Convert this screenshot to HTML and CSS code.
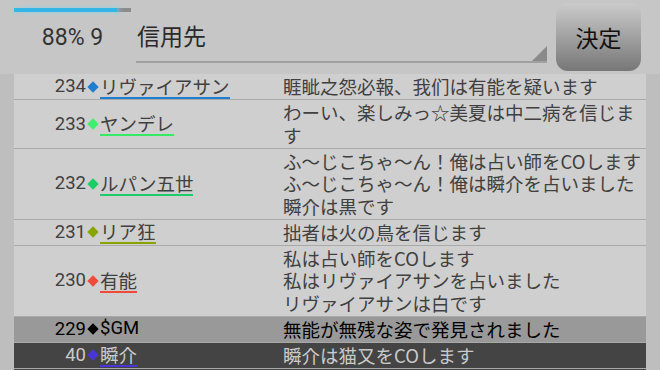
FILE: index.html
```html
<!DOCTYPE html>
<html>

<head>
    <meta charset="utf-8">
    <meta name="viewport" content="width=device-width, initial-scale=1">
    <title>Log</title>
    <link rel="stylesheet" href="styles.css">
</head>

<body>
    <div class="header">
        <div class="status">
            <div class="progress"><div class="progress-fill"></div></div>
            <div class="status-text">88% 9</div>
        </div>
        <div class="spinner">
            <span class="spinner-text">信用先</span>
            <span class="spinner-arrow"></span>
        </div>
        <button class="decide" type="button">決定</button>
    </div>

    <div class="log">
        <div class="row">
            <div class="who"><span class="num">234</span><span class="mark blue"></span><span class="name blue">リヴァイアサン</span></div>
            <div class="msg">睚眦之怨必報、我们は有能を疑います</div>
        </div>
        <div class="row">
            <div class="who"><span class="num">233</span><span class="mark lime"></span><span class="name lime">ヤンデレ</span></div>
            <div class="msg">わーい、楽しみっ☆美夏は中二病を信じます</div>
        </div>
        <div class="row">
            <div class="who"><span class="num">232</span><span class="mark green"></span><span class="name green">ルパン五世</span></div>
            <div class="msg">ふ〜じこちゃ〜ん！俺は占い師をCOします<br>ふ〜じこちゃ〜ん！俺は瞬介を占いました<br>瞬介は黒です</div>
        </div>
        <div class="row">
            <div class="who"><span class="num">231</span><span class="mark olive"></span><span class="name olive">リア狂</span></div>
            <div class="msg">拙者は火の鳥を信じます</div>
        </div>
        <div class="row">
            <div class="who"><span class="num">230</span><span class="mark red"></span><span class="name red">有能</span></div>
            <div class="msg">私は占い師をCOします<br>私はリヴァイアサンを占いました<br>リヴァイアサンは白です</div>
        </div>
        <div class="row system">
            <div class="who"><span class="num">229</span><span class="mark black"></span><span class="name plain">$GM</span></div>
            <div class="msg">無能が無残な姿で発見されました</div>
        </div>
        <div class="row self">
            <div class="who"><span class="num">40</span><span class="mark indigo"></span><span class="name indigo">瞬介</span></div>
            <div class="msg">瞬介は猫又をCOします</div>
        </div>
        <div class="row self filler"></div>
    </div>
</body>

</html>
```

FILE: styles.css
```css
body {
    margin: 0;
    width: 660px;
    height: 370px;
    overflow: hidden;
    background-color: #c6c6c6;
    font-family: Roboto, "Noto Sans CJK JP", sans-serif;
    color: #404040;
}

/* top bar */

.header {
    display: flex;
    align-items: flex-start;
    height: 74px;
}

.status {
    width: 117px;
    margin-left: 14px;
    padding-top: 8px;
}

.progress {
    height: 4px;
    background-color: #8c8c8c;
}

.progress-fill {
    width: 103px;
    height: 100%;
    background-color: #33b5e5;
    box-shadow: 3px 0 4px rgba(120, 215, 250, 0.7);
}

.status-text {
    margin-top: 12px;
    font-size: 23px;
    line-height: 28px;
    text-align: center;
    color: #333;
}

.spinner {
    position: relative;
    width: 411px;
    height: 61px;
    margin-left: 5px;
    border-bottom: 2px solid #a0a0a0;
}

.spinner-text {
    display: block;
    margin-top: 21px;
    padding-left: 1px;
    font-family: "Noto Sans CJK JP", sans-serif;
    font-size: 23px;
    line-height: 28px;
    color: #2a2a2a;
}

.spinner-arrow {
    position: absolute;
    right: 0;
    bottom: 0;
    width: 0;
    height: 0;
    border-left: 15px solid transparent;
    border-bottom: 15px solid #8a8a8a;
}

.decide {
    width: 85px;
    height: 68px;
    margin: 3px 0 0 9px;
    padding: 0;
    border: none;
    border-radius: 12px;
    background: linear-gradient(#cbcbcb, #777777);
    font-family: "Noto Sans CJK JP", sans-serif;
    font-size: 23px;
    color: #111;
}

/* log list */

.log {
    padding: 0 14px;
    background-color: #bebebe;
}

.row {
    display: flex;
    align-items: center;
    padding: 1.25px 0;
    background-color: #cfcfcf;
    border-bottom: 1px solid #a9a9a9;
    font-size: 18.5px;
    line-height: 22.5px;
}

.row.system {
    background-color: #999999;
    color: #000;
}

.row.self {
    background-color: #444444;
    color: #cacaca;
}

.row.filler {
    height: 22.5px;
}

.who {
    display: flex;
    align-items: center;
    flex: none;
    width: 269px;
    height: 22.5px;
}

.num {
    width: 72px;
    text-align: right;
}

.mark {
    width: 8px;
    height: 8px;
    margin: 0 3px;
    transform: rotate(45deg);
}

.name {
    font-family: "Noto Sans CJK JP", sans-serif;
    line-height: 22px;
    border-bottom: 2px solid;
}

.name.plain {
    font-family: Roboto, sans-serif;
    border-bottom-color: transparent;
}

.msg {
    flex: 1;
    font-family: "Noto Sans CJK JP", sans-serif;
}

.mark.blue { background-color: #1f7dd0; }
.name.blue { border-bottom-color: #1f7dd0; }
.mark.lime { background-color: #40ee70; }
.name.lime { border-bottom-color: #36ea66; }
.mark.green { background-color: #1ccc66; }
.name.green { border-bottom-color: #1ccc66; }
.mark.olive { background-color: #88a400; }
.name.olive { border-bottom-color: #88a400; }
.mark.red { background-color: #f04a3a; }
.name.red { border-bottom-color: #f04a3a; }
.mark.black { background-color: #000; }
.mark.indigo { background-color: #4a36d6; }
.name.indigo { border-bottom-color: #4a36d6; }
```
